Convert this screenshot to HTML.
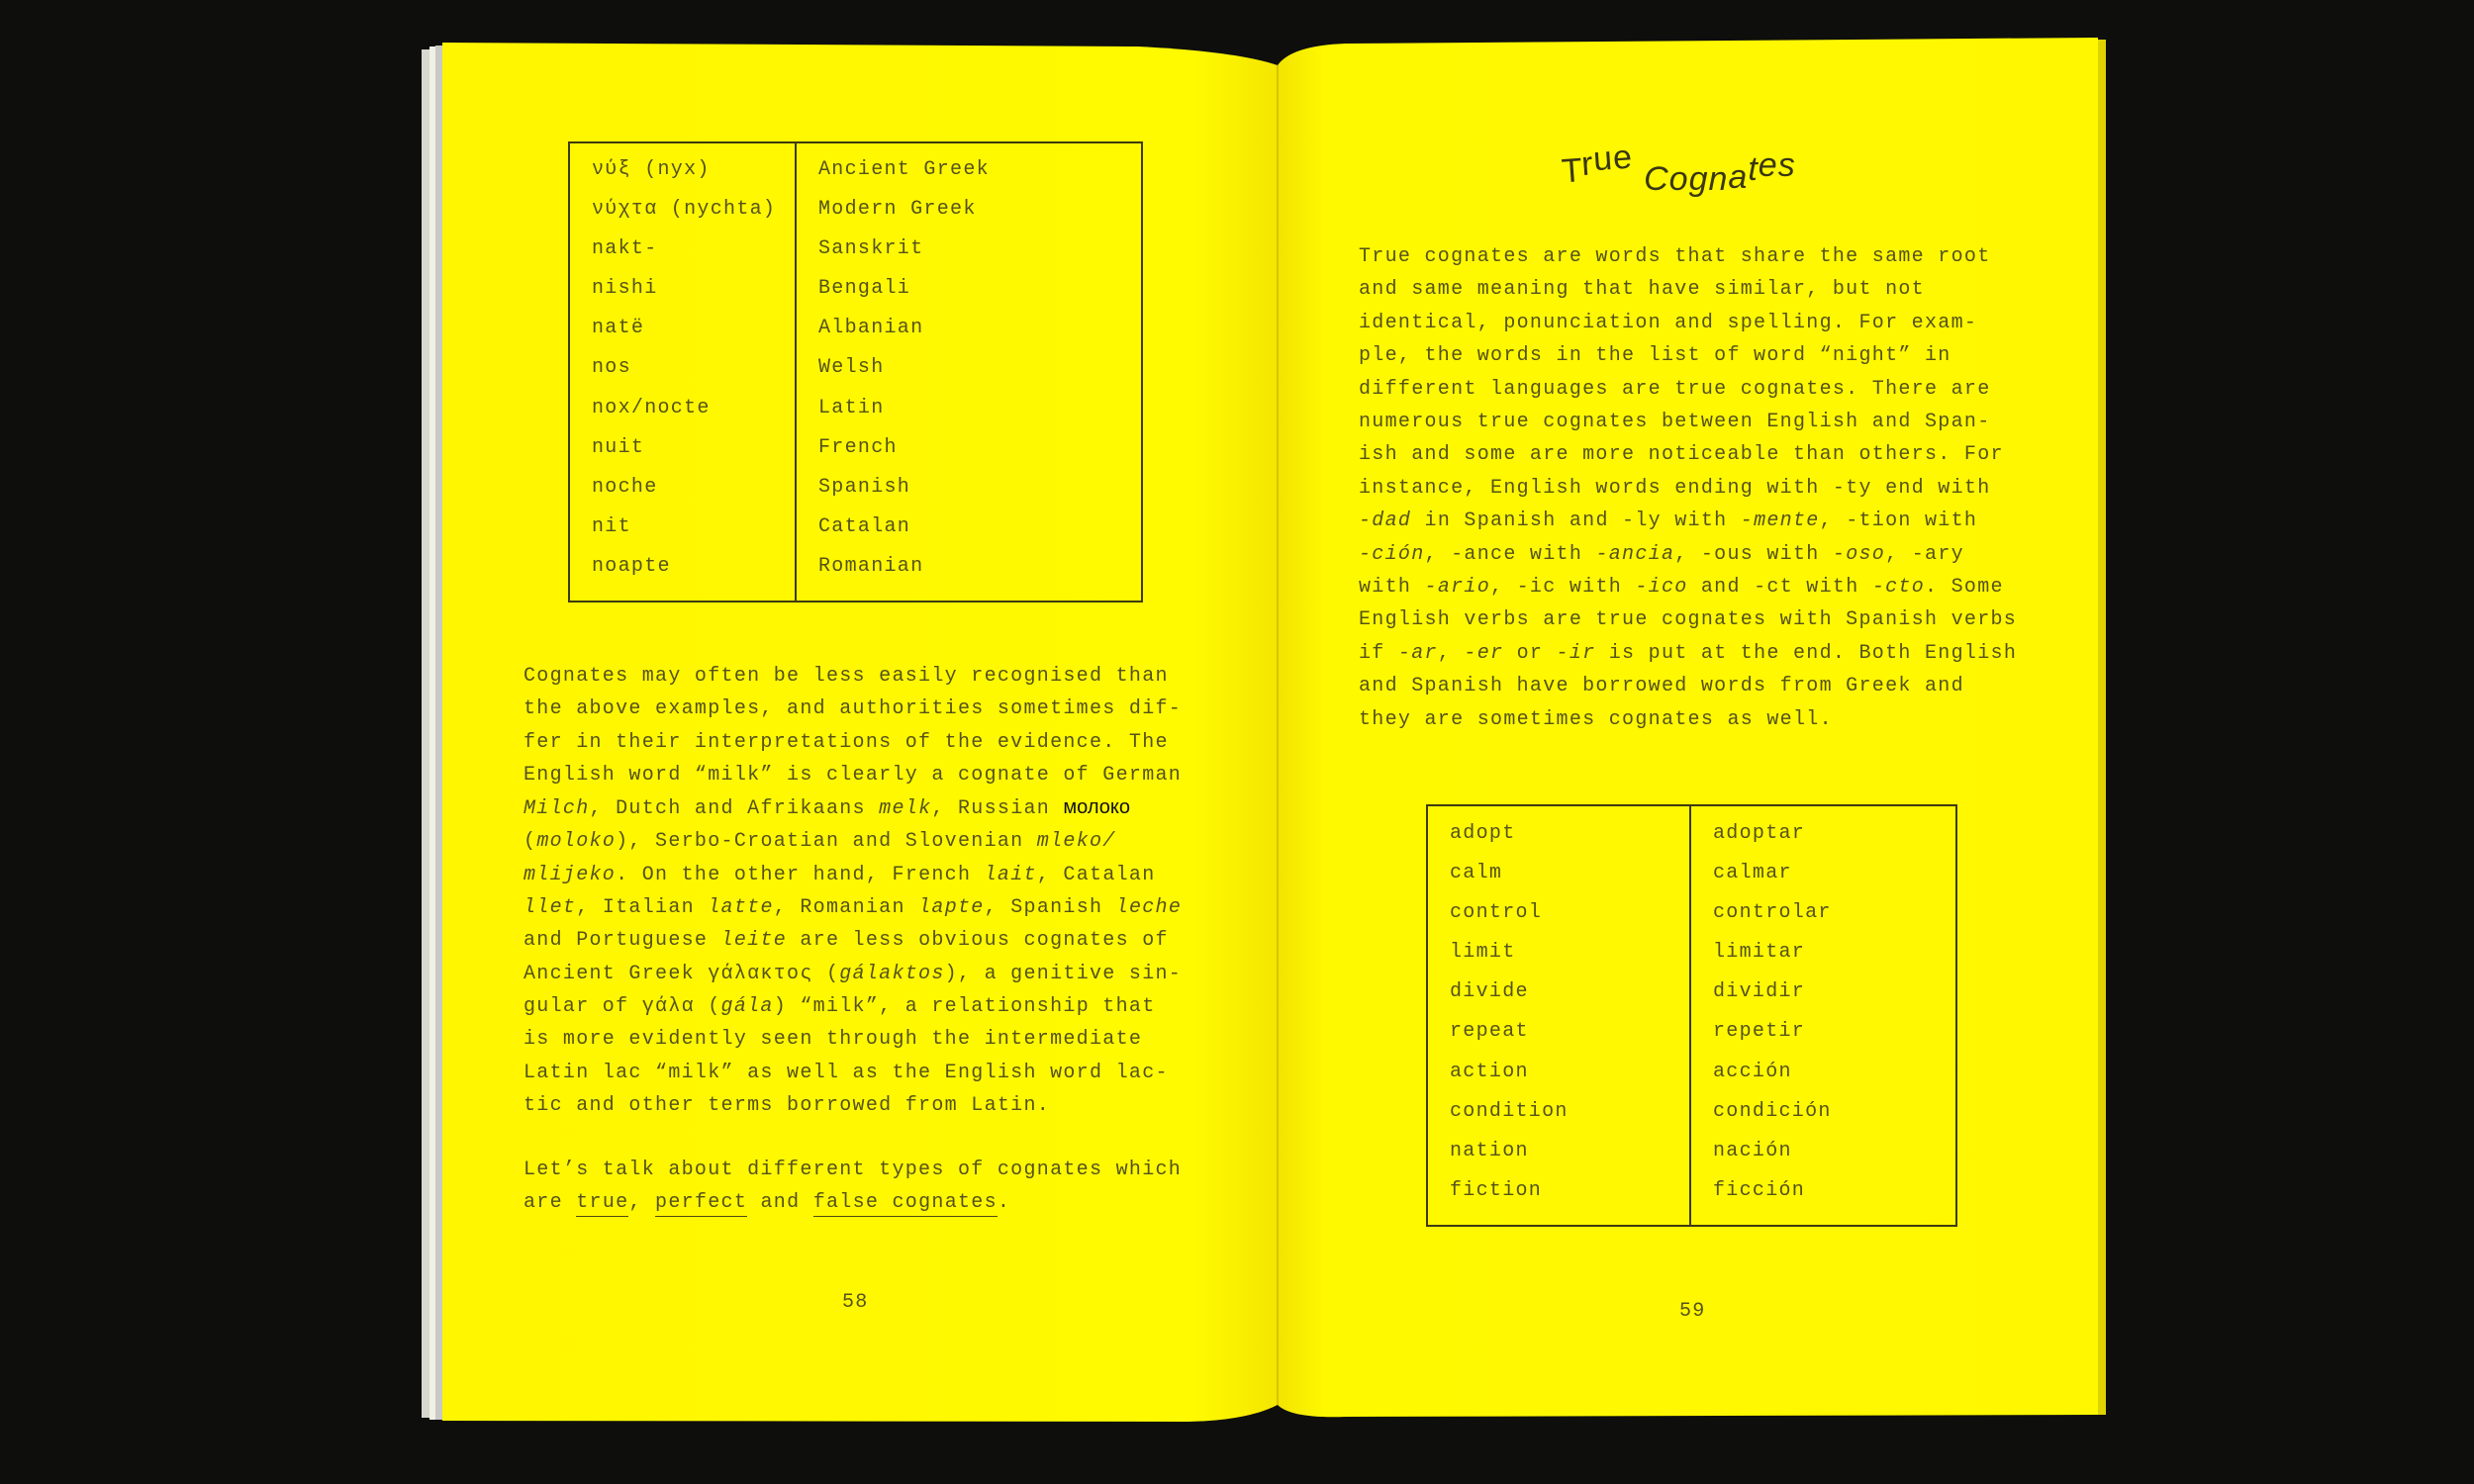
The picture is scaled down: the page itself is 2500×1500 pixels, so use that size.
<!DOCTYPE html>
<html><head><meta charset="utf-8"><style>
html,body{margin:0;padding:0;background:#0e0e0c;}
body{width:2500px;height:1500px;position:relative;overflow:hidden;}
.t{position:absolute;font-family:"Liberation Mono","DejaVu Sans Mono",monospace;font-size:20px;letter-spacing:1.3px;color:#55521a;white-space:pre;}
.lines{line-height:33.3px;}
.rows{line-height:40.1px;}
i{font-style:italic;}
u{text-decoration:none;border-bottom:1.5px solid #4d4a14;padding-bottom:2px;}
.box{position:absolute;border:2px solid #3d3a10;}
.vl{position:absolute;width:2px;background:#3d3a10;}
</style></head><body>
<svg width="2500" height="1500" style="position:absolute;left:0;top:0">
<defs>
<linearGradient id="gl" x1="0" x2="1" y1="0" y2="0">
<stop offset="0" stop-color="#fff600"/><stop offset="0.9" stop-color="#fffa00"/><stop offset="1" stop-color="#f4e600"/></linearGradient>
<linearGradient id="gr" x1="0" x2="1" y1="0" y2="0">
<stop offset="0" stop-color="#f2e400"/><stop offset="0.06" stop-color="#fff900"/><stop offset="1" stop-color="#fff700"/></linearGradient>
</defs>
<rect x="426" y="50" width="8" height="1383" fill="#d8d8d0"/>
<rect x="434" y="47" width="6" height="1388" fill="#f0f0e4"/>
<rect x="440" y="46" width="7" height="1389" fill="#c8c8c4"/>
<path d="M447 43 L1150 47 Q1250 52 1291 66 L1291 1420 Q1260 1436 1200 1437 L447 1436 Z" fill="url(#gl)"/>
<path d="M1291 66 Q1305 46 1360 44 L2120 38 L2122 1430 L1360 1432 Q1305 1434 1291 1420 Z" fill="url(#gr)"/>
<rect x="2120" y="40" width="8" height="1390" fill="#e0d400"/>
<line x1="1291" y1="66" x2="1291" y2="1420" stroke="#d9c200" stroke-width="2"/>
</svg>

<div class="box" style="left:574px;top:143px;width:577px;height:462px;"></div>
<div class="vl" style="left:803px;top:143px;height:464px;"></div>
<div class="t rows" style="left:598px;top:152px;">νύξ (nyx)
νύχτα (nychta)
nakt-
nishi
natë
nos
nox/nocte
nuit
noche
nit
noapte</div>
<div class="t rows" style="left:827px;top:152px;">Ancient Greek
Modern Greek
Sanskrit
Bengali
Albanian
Welsh
Latin
French
Spanish
Catalan
Romanian</div>

<div class="t lines" style="left:529px;top:667px;">Cognates may often be less easily recognised than
the above examples, and authorities sometimes dif-
fer in their interpretations of the evidence. The
English word “milk” is clearly a cognate of German
<i>Milch</i>, Dutch and Afrikaans <i>melk</i>, Russian <span style="font-family:'Liberation Sans',sans-serif;color:#111;letter-spacing:0">молоко</span>
(<i>moloko</i>), Serbo-Croatian and Slovenian <i>mleko/</i>
<i>mlijeko</i>. On the other hand, French <i>lait</i>, Catalan
<i>llet</i>, Italian <i>latte</i>, Romanian <i>lapte</i>, Spanish <i>leche</i>
and Portuguese <i>leite</i> are less obvious cognates of
Ancient Greek γάλακτος (<i>gálaktos</i>), a genitive sin-
gular of γάλα (<i>gála</i>) “milk”, a relationship that
is more evidently seen through the intermediate
Latin lac “milk” as well as the English word lac-
tic and other terms borrowed from Latin.</div>

<div class="t lines" style="left:529px;top:1166px;">Let’s talk about different types of cognates which
are <u>true</u>, <u>perfect</u> and <u>false cognates</u>.</div>

<div class="t" style="left:851px;top:1305px;">58</div>

<div class="t" style="left:1578px;top:152px;font-size:34px;letter-spacing:1px;font-family:'Liberation Sans',sans-serif;color:#3a3712;"><span style="display:inline-block;transform:rotate(-4deg)">T<span style="position:relative;top:-6px">r</span><span style="position:relative;top:-10px">ue</span></span> <span style="display:inline-block;font-style:italic;position:relative;top:10px;">Cogn<span style="position:relative;top:-2px">a</span><span style="position:relative;top:-10px">t</span><span style="position:relative;top:-14px">es</span></span></div>

<div class="t lines" style="left:1373px;top:243px;line-height:33.4px;">True cognates are words that share the same root
and same meaning that have similar, but not
identical, ponunciation and spelling. For exam-
ple, the words in the list of word “night” in
different languages are true cognates. There are
numerous true cognates between English and Span-
ish and some are more noticeable than others. For
instance, English words ending with -ty end with
<i>-dad</i> in Spanish and -ly with <i>-mente</i>, -tion with
<i>-ción</i>, -ance with <i>-ancia</i>, -ous with <i>-oso</i>, -ary
with <i>-ario</i>, -ic with <i>-ico</i> and -ct with <i>-cto</i>. Some
English verbs are true cognates with Spanish verbs
if <i>-ar</i>, <i>-er</i> or <i>-ir</i> is put at the end. Both English
and Spanish have borrowed words from Greek and
they are sometimes cognates as well.</div>

<div class="box" style="left:1441px;top:813px;width:533px;height:423px;"></div>
<div class="vl" style="left:1707px;top:813px;height:425px;"></div>
<div class="t rows" style="left:1465px;top:823px;">adopt
calm
control
limit
divide
repeat
action
condition
nation
fiction</div>
<div class="t rows" style="left:1731px;top:823px;">adoptar
calmar
controlar
limitar
dividir
repetir
acción
condición
nación
ficción</div>

<div class="t" style="left:1697px;top:1314px;">59</div>
</body></html>
